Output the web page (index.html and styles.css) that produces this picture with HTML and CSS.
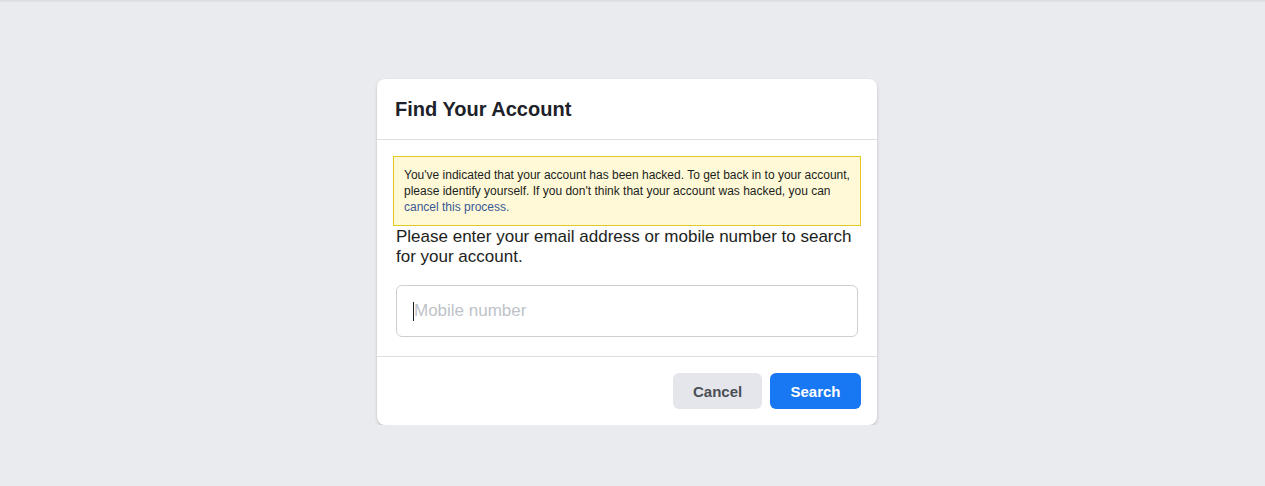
FILE: index.html
```html
<!DOCTYPE html>
<html>
<head>
<meta charset="utf-8">
<link rel="stylesheet" href="styles.css">
</head>
<body>
<div class="topshade"></div>
<div class="page">
  <div class="card">
    <div class="card-header">
      <h2 class="title">Find Your Account</h2>
    </div>
    <div class="card-body">
      <div class="notice">You've indicated that your account has been hacked. To get back in to your account, please identify yourself. If you don't think that your account was hacked, you can <a class="link" href="#">cancel this process.</a></div>
      <div class="prompt">Please enter your email address or mobile number to search for your account.</div>
      <div class="field">
        <span class="caret"></span><span class="placeholder">Mobile number</span>
      </div>
    </div>
    <div class="card-footer">
      <button class="btn btn-cancel">Cancel</button>
      <button class="btn btn-search">Search</button>
    </div>
  </div>
</div>
</body>
</html>
```

FILE: styles.css
```css
html, body {
  margin: 0;
  padding: 0;
  background: #e9ebee;
  font-family: "Liberation Sans", Arial, Helvetica, sans-serif;
  color: #1c1e21;
}
.topshade {
  height: 3px;
  background: linear-gradient(#d8dade, #e9ebee);
}
.page {
  display: flex;
  justify-content: center;
  padding-top: 76px;
  padding-right: 11px;
}
.card {
  width: 500px;
  background: #fff;
  border-radius: 8px;
  box-shadow: 0 1px 2px rgba(0,0,0,.15), 0 2px 4px rgba(0,0,0,.08);
}
.card-header {
  height: 60px;
  display: flex;
  align-items: center;
  padding: 0 18px;
  border-bottom: 1px solid #dddfe2;
}
.title {
  margin: 0;
  font-size: 20px;
  line-height: 24px;
  font-weight: bold;
  color: #1d2129;
}
.card-body {
  padding: 16px 16px 19px;
  border-bottom: 1px solid #dddfe2;
}
.notice {
  background: #fff9d7;
  border: 1px solid #e2c822;
  padding: 10px 10px 10px 10px;
  font-size: 12px;
  line-height: 16px;
  color: #1c1e21;
}
.link {
  color: #385898;
  text-decoration: none;
}
.prompt {
  font-size: 17px;
  line-height: 20px;
  padding: 1px 3px 0;
}
.field {
  margin: 18px 3px 0;
  height: 50px;
  border: 1px solid #ccd0d5;
  border-radius: 6px;
  display: flex;
  align-items: center;
  padding-left: 16px;
}
.caret {
  width: 1px;
  height: 19px;
  background: #1c1e21;
}
.placeholder {
  font-size: 17px;
  color: #bec3c9;
}
.card-footer {
  display: flex;
  justify-content: flex-end;
  gap: 8px;
  padding: 16px;
}
.btn {
  height: 36px;
  border: none;
  border-radius: 6px;
  font-family: "Liberation Sans", Arial, sans-serif;
  font-size: 15px;
  font-weight: bold;
  padding: 0 20px;
}
.btn-cancel {
  background: #e4e6eb;
  color: #4b4f56;
  width: 89px;
}
.btn-search {
  background: #1877f2;
  color: #fff;
  width: 91px;
}
```
